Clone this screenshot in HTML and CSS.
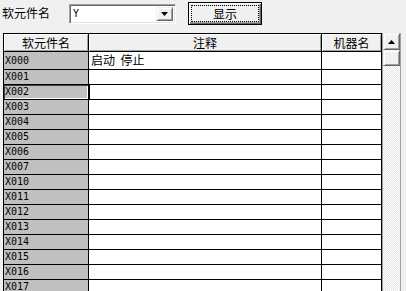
FILE: index.html
```html
<!DOCTYPE html>
<html>
<head>
<meta charset="utf-8">
<link rel="stylesheet" href="styles.css">
</head>
<body>
<div class="top">
  <div class="label">软元件名</div>
  <div class="combo">
    <div class="combo-text">Y</div>
    <div class="combo-btn"><svg width="7" height="4" viewBox="0 0 7 4"><path d="M0 0h7L3.5 4z" fill="#000"/></svg></div>
  </div>
  <div class="btn"><span class="btn-focus">显示</span></div>
</div>
<div class="main">
  <div class="grid">
    <div class="hcell">软元件名</div><div class="hcell">注释</div><div class="hcell">机器名</div>
    <div class="dev first">X000</div><div class="cell first cjk">启动&nbsp;&nbsp;停止</div><div class="cell first"></div>
    <div class="dev">X001</div><div class="cell"></div><div class="cell"></div>
    <div class="dev sel">X002</div><div class="cell selc"></div><div class="cell"></div>
    <div class="dev">X003</div><div class="cell"></div><div class="cell"></div>
    <div class="dev">X004</div><div class="cell"></div><div class="cell"></div>
    <div class="dev">X005</div><div class="cell"></div><div class="cell"></div>
    <div class="dev">X006</div><div class="cell"></div><div class="cell"></div>
    <div class="dev">X007</div><div class="cell"></div><div class="cell"></div>
    <div class="dev">X010</div><div class="cell"></div><div class="cell"></div>
    <div class="dev">X011</div><div class="cell"></div><div class="cell"></div>
    <div class="dev">X012</div><div class="cell"></div><div class="cell"></div>
    <div class="dev">X013</div><div class="cell"></div><div class="cell"></div>
    <div class="dev">X014</div><div class="cell"></div><div class="cell"></div>
    <div class="dev">X015</div><div class="cell"></div><div class="cell"></div>
    <div class="dev">X016</div><div class="cell"></div><div class="cell"></div>
    <div class="dev">X017</div><div class="cell"></div><div class="cell"></div>
  </div>
  <div class="scroll">
    <div class="sb-btn"><svg width="7" height="4" viewBox="0 0 7 4"><path d="M0 4h7L3.5 0z" fill="#000"/></svg></div>
    <div class="sb-thumb"></div>
    <div class="sb-track"></div>
  </div>
</div>
</body>
</html>
```
FILE: styles.css
```css
html, body {
  margin: 0;
  padding: 0;
  background: #f0f0f0;
  width: 406px;
  height: 291px;
  overflow: hidden;
  font-family: "Noto Sans CJK SC", "DejaVu Sans", sans-serif;
  font-size: 12px;
  color: #000;
}
.top {
  display: flex;
  height: 33px;
}
.label {
  margin: 5px 0 0 2px;
  width: 67px;
  line-height: 16px;
}
.combo {
  margin-top: 4px;
  width: 107px;
  height: 20px;
  box-sizing: border-box;
  border: 1px solid;
  border-color: #a0a0a0 #fff #fff #a0a0a0;
  box-shadow: inset 1px 1px #696969, inset -1px -1px #e3e3e3;
  background: #fff;
  display: flex;
  padding: 2px;
}
.combo-text {
  flex: 1;
  font-family: "DejaVu Sans Mono", monospace;
  font-size: 10px;
  line-height: 14px;
  padding-left: 1px;
}
.combo-btn {
  width: 17px;
  height: 14px;
  box-sizing: border-box;
  background: #f0f0f0;
  border: 1px solid;
  border-color: #f0f0f0 #696969 #696969 #f0f0f0;
  box-shadow: inset 1px 1px #fff, inset -1px -1px #a0a0a0;
  display: flex;
  align-items: center;
  justify-content: center;
}
.btn {
  margin: 2px 0 0 12px;
  width: 74px;
  height: 23px;
  box-sizing: border-box;
  border: 1px solid #000;
  background: #f0f0f0;
  box-shadow: inset 1px 1px #fff, inset -1px -1px #696969, inset -2px -2px #a0a0a0;
  display: flex;
  padding: 2px;
}
.btn-focus {
  flex: 1;
  border: 1px dotted #000;
  display: flex;
  align-items: center;
  justify-content: center;
  line-height: 14px;
}
.main {
  display: flex;
  margin-left: 3px;
}
.grid {
  width: 379px;
  box-sizing: border-box;
  border-left: 1px solid #000;
  border-top: 1px solid #000;
  display: grid;
  grid-template-columns: 85px 233px 60px;
  grid-auto-rows: 15px;
  grid-template-rows: 18px 18px;
}
.hcell, .dev, .cell {
  box-sizing: border-box;
  border-right: 1px solid #000;
  border-bottom: 1px solid #000;
}
.hcell {
  background: #f0f0f0;
  box-shadow: inset 1px 1px #fff, inset -1px -1px #a0a0a0;
  display: flex;
  align-items: center;
  justify-content: center;
  line-height: 16px;
}
.dev {
  background: #c0c0c0;
  font-family: "DejaVu Sans Mono", monospace;
  font-size: 10px;
  line-height: 14px;
  padding-left: 1px;
}
.dev.first {
  line-height: 17px;
}
.dev.sel {
  box-shadow: inset 1px 1px #404040, inset -1px -1px #fff;
}
.cell {
  background: #fff;
}
.cell.selc {
  box-shadow: inset 1px 0 #000, inset 2px 0 #fff;
}
.cjk {
  padding-left: 2px;
  line-height: 16px;
}
.scroll {
  width: 19px;
  box-sizing: border-box;
  border-left: 1px solid #a0a0a0;
  border-right: 1px solid #a0a0a0;
  display: flex;
  flex-direction: column;
  height: 258px;
}
.sb-btn, .sb-thumb {
  height: 17px;
  box-sizing: border-box;
  background: #f0f0f0;
  border: 1px solid;
  border-color: #f0f0f0 #696969 #696969 #f0f0f0;
  box-shadow: inset 1px 1px #fff, inset -1px -1px #a0a0a0;
  display: flex;
  align-items: center;
  justify-content: center;
}
.sb-thumb {
  height: 16px;
}
.sb-track {
  flex: 1;
  background: conic-gradient(#fff 25%, #e6e6e6 0 50%, #fff 0 75%, #e6e6e6 0) 0 0 / 2px 2px;
}
```
